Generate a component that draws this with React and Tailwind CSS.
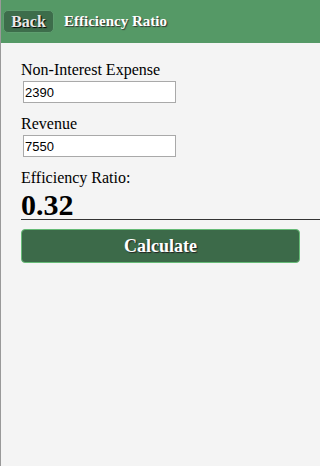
import React, { useState } from 'react';

const serif = { fontFamily: '"Liberation Serif", "Times New Roman", serif' };

const App = () => {
  const [expense, setExpense] = useState('2390');
  const [revenue, setRevenue] = useState('7550');
  const [ratio, setRatio] = useState('0.32');

  const calc = () => {
    const e = parseFloat(expense);
    const r = parseFloat(revenue);
    if (r) setRatio((e / r).toFixed(2));
  };

  return (
    <div className="w-[320px] h-[466px] bg-[#f4f4f4] border-l border-[#999] overflow-hidden" style={serif}>
      {/* header */}
      <div className="h-[43px] bg-[#559966] flex items-center pl-[1px]">
        <button className="h-[23px] w-[51px] ml-[1px] rounded-[5px] bg-[#3d6d4b] border border-[#5e9e6f] text-[16px] font-bold text-[#e8e8e8] leading-none [text-shadow:1px_1px_1px_#000]">
          Back
        </button>
        <h1 className="ml-[10px] text-[15px] font-bold text-white [text-shadow:1px_1px_1px_#333]">
          Efficiency Ratio
        </h1>
      </div>

      <div className="pl-[20px] pt-[17px]">
        <label className="block text-[16px] leading-[19px] text-black">Non-Interest Expense</label>
        <input
          value={expense}
          onChange={(e) => setExpense(e.target.value)}
          className="block mt-[2px] ml-[2px] w-[153px] h-[22px] bg-white border border-[#a9a9a9] px-[1px] text-[13px] text-black outline-none"
          style={{ fontFamily: '"Liberation Sans", Arial, sans-serif' }}
        />

        <label className="block mt-[11px] text-[16px] leading-[19px] text-black">Revenue</label>
        <input
          value={revenue}
          onChange={(e) => setRevenue(e.target.value)}
          className="block mt-[2px] ml-[2px] w-[153px] h-[22px] bg-white border border-[#a9a9a9] px-[1px] text-[13px] text-black outline-none"
          style={{ fontFamily: '"Liberation Sans", Arial, sans-serif' }}
        />

        <div className="mt-[11px] text-[16px] leading-[19px] text-black">Efficiency Ratio:</div>
        <div className="border-b border-[#333] text-[30px] font-bold leading-[30px] text-black h-[33px] pt-[3px]">
          {ratio}
        </div>

        <button
          onClick={calc}
          className="mt-[9px] w-[279px] h-[34px] rounded-[4px] bg-[#3c6a49] border border-[#66bb77] text-[18px] font-bold text-white [text-shadow:1px_1px_1px_#222]"
        >
          Calculate
        </button>
      </div>
    </div>
  );
};

export default App;
